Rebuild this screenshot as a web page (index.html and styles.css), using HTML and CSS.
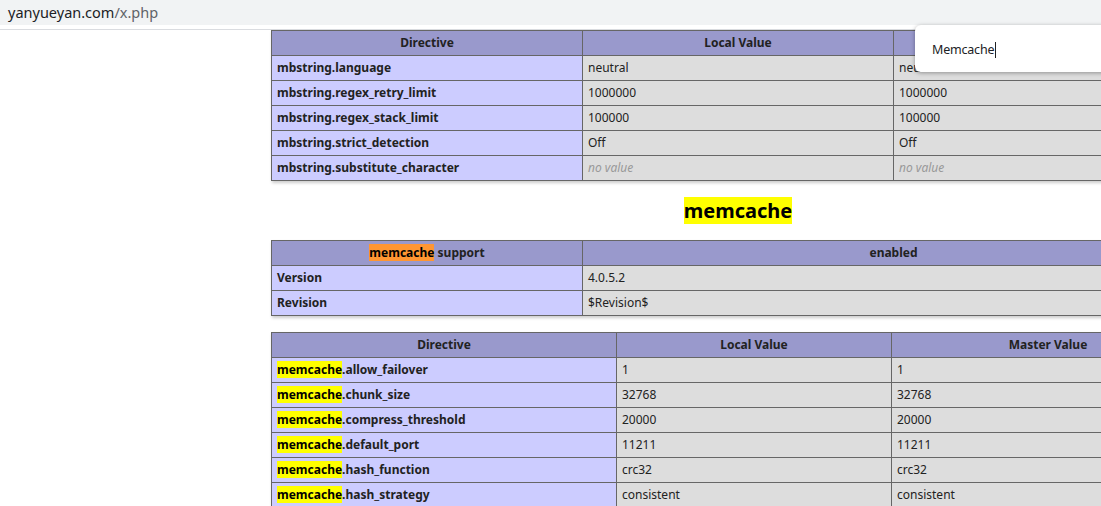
FILE: index.html
```html
<!DOCTYPE html>
<html>
<head>
  <title>phpinfo()</title>
  <link rel="stylesheet" href="styles.css">
</head>
<body>
  <div class="omnibox"><span class="host">yanyueyan.com</span><span class="path">/x.php</span></div>
  <div class="chrome-line"></div>

  <div class="viewport">
    <div class="center">
      <table class="t-three">
        <tr class="h"><th>Directive</th><th>Local Value</th><th>Master Value</th></tr>
        <tr><td class="e">mbstring.language</td><td class="v">neutral</td><td class="v">neutral</td></tr>
        <tr><td class="e">mbstring.regex_retry_limit</td><td class="v">1000000</td><td class="v">1000000</td></tr>
        <tr><td class="e">mbstring.regex_stack_limit</td><td class="v">100000</td><td class="v">100000</td></tr>
        <tr><td class="e">mbstring.strict_detection</td><td class="v">Off</td><td class="v">Off</td></tr>
        <tr><td class="e">mbstring.substitute_character</td><td class="v"><i>no value</i></td><td class="v"><i>no value</i></td></tr>
      </table>

      <h2><a name="module_memcache"><mark>memcache</mark></a></h2>

      <table class="t-two">
        <tr class="h"><th><mark class="active">memcache</mark> support</th><th>enabled</th></tr>
        <tr><td class="e">Version </td><td class="v">4.0.5.2 </td></tr>
        <tr><td class="e">Revision </td><td class="v">$Revision$ </td></tr>
      </table>

      <table class="t-wide">
        <tr class="h"><th>Directive</th><th>Local Value</th><th>Master Value</th></tr>
        <tr><td class="e"><mark>memcache</mark>.allow_failover</td><td class="v">1</td><td class="v">1</td></tr>
        <tr><td class="e"><mark>memcache</mark>.chunk_size</td><td class="v">32768</td><td class="v">32768</td></tr>
        <tr><td class="e"><mark>memcache</mark>.compress_threshold</td><td class="v">20000</td><td class="v">20000</td></tr>
        <tr><td class="e"><mark>memcache</mark>.default_port</td><td class="v">11211</td><td class="v">11211</td></tr>
        <tr><td class="e"><mark>memcache</mark>.hash_function</td><td class="v">crc32</td><td class="v">crc32</td></tr>
        <tr><td class="e"><mark>memcache</mark>.hash_strategy</td><td class="v">consistent</td><td class="v">consistent</td></tr>
      </table>
    </div>
  </div>

  <div class="findbar">
    <span class="find-text">Memcache</span><span class="caret"></span>
  </div>
</body>
</html>
```

FILE: styles.css
```css
html, body {
  margin: 0;
  padding: 0;
  background: #fff;
  overflow: hidden;
}
body {
  color: #222;
  font-family: "Noto Sans", "Open Sans", sans-serif;
  height: 506px;
  position: relative;
}
.omnibox {
  height: 25px;
  background: #f1f3f4;
  padding-left: 8px;
  font-size: 14.5px;
  line-height: 25px;
  color: #202124;
}
.omnibox .path {
  color: #5f6368;
}
.chrome-line {
  margin-top: 4px;
  height: 1px;
  background: #dadce0;
}
.viewport {
  width: 1458px;
  margin: 0 9px;
}
.center {
  text-align: center;
}
.center table {
  margin: 0 auto 16px;
  text-align: left;
}
table {
  border-collapse: collapse;
  border: 0;
  width: 934px;
  table-layout: fixed;
  box-shadow: 1px 2px 3px #ccc;
}
td, th {
  border: 1px solid #666;
  font-size: 12px;
  line-height: 16px;
  height: 16px;
  vertical-align: baseline;
  padding: 4px 5px;
  overflow: hidden;
  white-space: nowrap;
}
th {
  text-align: center;
}
.h {
  background-color: #99c;
  font-weight: bold;
}
.e {
  background-color: #ccf;
  font-weight: bold;
}
.v {
  background-color: #ddd;
}
.v i {
  color: #999;
}
.t-three th:nth-child(1) { width: 300px; }
.t-three th:nth-child(2) { width: 300px; }
.t-two th:nth-child(1) { width: 300px; }
.t-wide th:nth-child(1) { width: 334px; }
.t-wide th:nth-child(2) { width: 264px; }

h2 {
  font-size: 20px;
  line-height: 26px;
  margin: 17px 0 16px;
}
h2 a {
  color: #222;
  text-decoration: none;
}
mark {
  background: #ffff00;
  color: #000;
}
mark.active {
  background: #ff9632;
}

.findbar {
  position: absolute;
  left: 915px;
  top: 25px;
  width: 220px;
  height: 47px;
  background: #fff;
  border-radius: 6px;
  box-shadow: 0 1px 4px rgba(0, 0, 0, 0.35);
  display: flex;
  align-items: center;
  padding: 2px 0 0 17px;
  box-sizing: border-box;
}
.find-text {
  font-size: 12.5px;
  color: #202124;
  letter-spacing: -0.2px;
}
.caret {
  width: 1px;
  height: 16px;
  background: #202124;
  margin-left: 1px;
}
```
